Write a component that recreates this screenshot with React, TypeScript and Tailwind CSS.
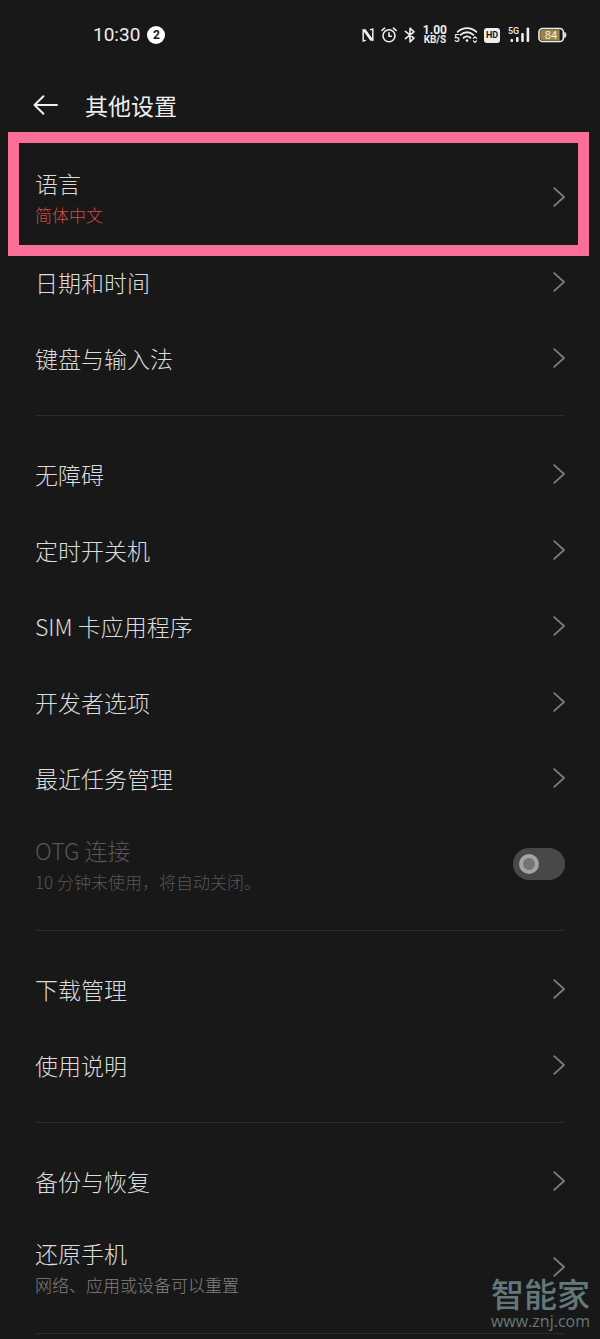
import type { ReactNode } from "react";

type Item = {
  title: string;
  note?: string;
  accent?: boolean;
  marked?: boolean;
};

const general: Item[] = [
  { title: "语言", note: "简体中文", accent: true, marked: true },
  { title: "日期和时间" },
  { title: "键盘与输入法" },
];

const system: Item[] = [
  { title: "无障碍" },
  { title: "定时开关机" },
  { title: "SIM 卡应用程序" },
  { title: "开发者选项" },
  { title: "最近任务管理" },
];

const support: Item[] = [{ title: "下载管理" }, { title: "使用说明" }];

const reset: Item[] = [
  { title: "备份与恢复" },
  { title: "还原手机", note: "网络、应用或设备可以重置" },
];

function Chevron() {
  return (
    <svg
      className="h-5 w-3 shrink-0"
      viewBox="0 0 12 20"
      fill="none"
      stroke="#7c7c7c"
      strokeWidth="1.8"
      strokeLinecap="round"
      strokeLinejoin="round"
      aria-hidden="true"
    >
      <path d="M1.2 1.2 11 10l-9.8 8.8" />
    </svg>
  );
}

function Row({ item }: { item: Item }) {
  return (
    <li className="relative">
      <a
        href="#"
        className={`flex items-center justify-between ${item.note ? "h-[95px]" : "h-[76px]"}`}
      >
        <span className="flex flex-col gap-1">
          <span className="text-[23px] leading-8 text-[#dcdcdc]">{item.title}</span>
          {item.note && (
            <span
              className={`text-[17px] leading-6 ${item.accent ? "text-[#d04a44]" : "text-[#808080]"}`}
            >
              {item.note}
            </span>
          )}
        </span>
        <Chevron />
      </a>
      {item.marked && (
        <div className="pointer-events-none absolute -top-[17px] -right-6 -bottom-3 -left-[27px] border-[11px] border-[#f96f97]" />
      )}
    </li>
  );
}

function Group({ items, children }: { items: Item[]; children?: ReactNode }) {
  return (
    <ul className="border-b border-[#2b2b2b] pt-5 pb-[19px] first:pt-[9px]">
      {items.map((item) => (
        <Row key={item.title} item={item} />
      ))}
      {children}
    </ul>
  );
}

function OtgRow() {
  return (
    <li>
      <label htmlFor="otg" className="flex h-[95px] items-center justify-between">
        <span className="flex flex-col gap-1 text-[#565656]">
          <span className="text-[23px] leading-8">OTG 连接</span>
          <span className="text-[17px] leading-6">10 分钟未使用，将自动关闭。</span>
        </span>
        <input
          id="otg"
          type="checkbox"
          role="switch"
          disabled
          className="flex h-8 w-[52px] shrink-0 appearance-none items-center rounded-full bg-[#484848] pl-1.5 before:size-5 before:rounded-full before:border-4 before:border-[#a3a3a3] before:bg-[#747474] before:content-['']"
        />
      </label>
    </li>
  );
}

function StatusBar() {
  return (
    <div className="flex h-[70px] items-center justify-between pr-[33px] pl-[93px] text-[#eeeeee]">
      <div className="flex items-center gap-[7px]">
        <span className="font-[Roboto] text-[19px] leading-6 font-normal">10:30</span>
        <span className="flex size-[18px] items-center justify-center rounded-full bg-white font-[Roboto] text-[12px] leading-none font-bold text-[#181818]">
          2
        </span>
      </div>

      <div className="flex items-center gap-1.5">
        <div className="flex items-center gap-[7px]">
          {/* nfc */}
          <svg className="h-4 w-3" viewBox="0 0 12 16" fill="none" stroke="currentColor" strokeWidth="1.5" strokeLinecap="round" strokeLinejoin="round" aria-hidden="true">
            <path d="M3.4 13.4 1.2 14V2.6L9 13.2M3 2.6l7.800 10.800V2L8.600 2.600" />
          </svg>

          {/* alarm */}
          <svg className="size-4" viewBox="0 0 16 16" fill="none" stroke="currentColor" strokeWidth="1.6" strokeLinecap="round" aria-hidden="true">
            <circle cx="8" cy="8.8" r="6" />
            <path d="M8 5.8v3.4h2.4M1 3.4 3.6 1.2M15 3.4l-2.6-2.2" />
          </svg>

          {/* bluetooth */}
          <svg className="h-4 w-3" viewBox="0 0 12 16" fill="none" stroke="currentColor" strokeWidth="1.6" strokeLinejoin="round" strokeLinecap="round" aria-hidden="true">
            <path d="M1.4 4.4 10 11.2 6 14.8V1.2l4 3.6-8.6 6.8" />
          </svg>

          <span className="flex flex-col items-center font-[Roboto] font-bold">
            <span className="text-[12px] leading-[10px]">1.00</span>
            <span className="text-[10px] leading-[10px]">KB/S</span>
          </span>

          {/* wifi */}
          <svg className="h-[18px] w-6" viewBox="0 0 24 18" fill="none" stroke="currentColor" strokeWidth="1.8" strokeLinecap="round" aria-hidden="true">
            <path d="M3.6 5.8c5.4-5 13.4-5 18.8 0M6.6 8.8c3.8-3.4 9-3.4 12.8 0M9.6 11.8c2-1.7 4.8-1.7 6.8 0" />
            <circle cx="13" cy="14.6" r="1.3" fill="currentColor" stroke="none" />
            <path d="m19.4 12.4 1.6-1.6 1.6 1.6M19.4 14.8l1.6 1.6 1.6-1.6" strokeWidth="1.2" />
            <text x="0" y="16" fontSize="10" fontFamily="Roboto, sans-serif" fontWeight="500" fill="currentColor" stroke="none">5</text>
          </svg>
        </div>

        <div className="flex items-center gap-2">
          <span className="flex h-[15px] w-4 items-center justify-center rounded-[3px] bg-[#eeeeee] font-[Roboto] text-[9px] leading-none font-bold text-[#181818]">
            HD
          </span>

          {/* mobile signal */}
          <svg className="h-[18px] w-[22px]" viewBox="0 0 22 18" fill="currentColor" aria-hidden="true">
            <text x="0" y="8" fontSize="9" fontFamily="Roboto, sans-serif" fontWeight="500">5G</text>
            <rect x="2.5" y="13" width="2.6" height="3" rx="1" />
            <rect x="8" y="11" width="2.6" height="5" rx="1" />
            <rect x="13.2" y="7" width="2.6" height="9" rx="1" />
            <rect x="18.6" y="1.4" width="2.6" height="14.6" rx="1" />
          </svg>

          {/* battery */}
          <svg className="h-4 w-[29px]" viewBox="0 0 29 16" aria-hidden="true">
            <rect x="1" y="1.5" width="24.4" height="13" rx="3.6" fill="#181818" stroke="#eeeeee" strokeWidth="1.6" />
            <path d="M5 2.6h16.6v10.8H5a2.8 2.8 0 0 1-2.8-2.8V5.4A2.8 2.8 0 0 1 5 2.6Z" fill="#9a8549" />
            <path d="M26.8 5.4c1.4.6 1.4 4.6 0 5.2Z" fill="#eeeeee" stroke="#eeeeee" />
            <text x="13" y="12" fontSize="11" fontFamily="Roboto, sans-serif" fontWeight="400" textAnchor="middle" fill="#f4f0e2">84</text>
          </svg>
        </div>
      </div>
    </div>
  );
}

export default function App() {
  return (
    <div className="relative min-h-screen bg-[#181818] pb-1 font-['Noto_Sans_CJK_SC',sans-serif] font-light">
      <StatusBar />

      <header className="flex h-[70px] items-center gap-[27px] px-[33px] text-[#eeeeee]">
        <button type="button" aria-label="返回">
          <svg className="block h-5 w-[25px]" viewBox="0 0 25 20" fill="none" stroke="currentColor" strokeWidth="2" strokeLinecap="round" strokeLinejoin="round" aria-hidden="true">
            <path d="M24 10H1.5M10.4 1.2 1.5 10l8.9 8.8" />
          </svg>
        </button>
        <h1 className="text-[23px] leading-8 font-normal">其他设置</h1>
      </header>

      <main className="px-[35px]">
        <Group items={general} />
        <Group items={system}>
          <OtgRow />
        </Group>
        <Group items={support} />
        <Group items={reset} />
      </main>

      <div className="pointer-events-none absolute right-[10px] bottom-2 flex flex-col items-center text-[#64787b]">
        <span className="text-[33px] leading-9 font-medium">智能家</span>
        <span className="font-['Open_Sans'] text-[16px] leading-5 font-normal">www.znj.com</span>
      </div>
    </div>
  );
}
